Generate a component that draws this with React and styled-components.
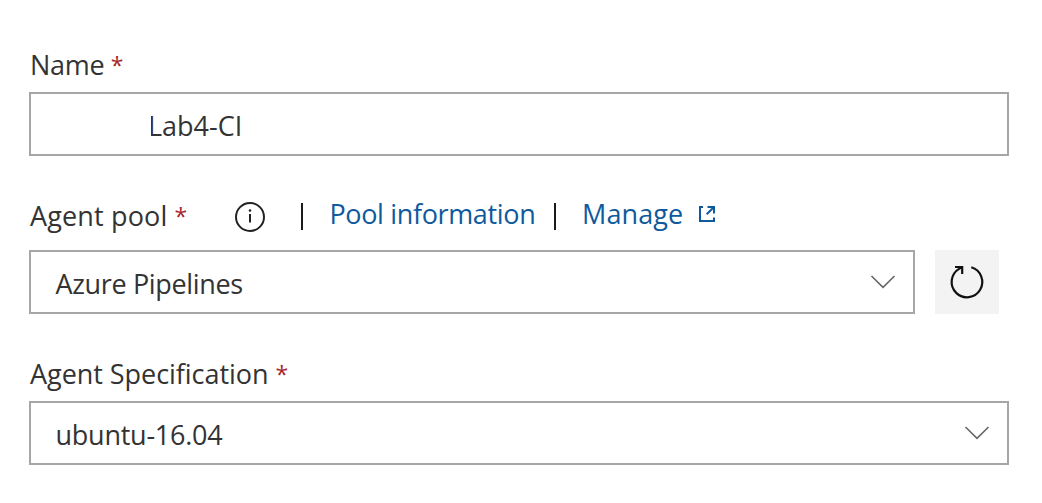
import React from "react";
import styled, { createGlobalStyle } from "styled-components";

const GlobalStyle = createGlobalStyle`
  * { box-sizing: border-box; }
  body {
    margin: 0;
    background: #fff;
    color: #333;
    font: 27px/38px "Open Sans", "Noto Sans", sans-serif;
  }
`;

const Form = styled.main`
  width: 1042px;
  height: 503px;
  padding: 46px 33px 0 29px;
  display: flex;
  flex-direction: column;
`;

const Field = styled.section`
  margin-bottom: ${(p) => p.$gap}px;
`;

const LabelRow = styled.div`
  display: flex;
  align-items: flex-start;
  height: ${(p) => p.$height}px;
  padding-left: 1px;
  white-space: pre;
`;

const Text = styled.span`
  letter-spacing: ${(p) => p.$spacing || 0}px;
`;

const Required = styled.span`
  width: 12px;
  margin-left: ${(p) => p.$gap}px;
  color: #a4262c;
  font-size: 23px;
`;

const ControlRow = styled.div`
  display: flex;
  gap: 20px;
`;

const Box = styled.div`
  position: relative;
  display: flex;
  align-items: center;
  justify-content: space-between;
  width: ${(p) => p.$width}px;
  height: 64px;
  padding: 4px 17px 0 ${(p) => p.$indent || 24.5}px;
  border: 2px solid #a6a6a6;
  white-space: pre;
`;

const Redaction = styled.span`
  position: absolute;
  top: 8px;
  bottom: 8px;
  left: 16px;
  width: 104px;
  background: #fff;
`;

const InfoIcon = styled.svg`
  margin: 4px 0 0 47.5px;
`;

const Divider = styled.span`
  width: 2px;
  height: 27px;
  margin-top: 6px;
  margin-left: ${(p) => p.$left}px;
  background: #1a1a1a;
`;

const Link = styled.a`
  margin-top: -2px;
  margin-left: ${(p) => p.$left}px;
  color: #0f5a9c;
  letter-spacing: ${(p) => p.$spacing}px;
`;

const ExternalIcon = styled.svg`
  margin: 7px 0 0 14px;
`;

const RefreshButton = styled.button`
  width: 64px;
  height: 64px;
  padding: 0;
  border: 0;
  background: #f3f3f3;
`;

const ChevronIcon = styled.svg`
  margin-top: -4px;
`;

function Chevron() {
  return (
    <ChevronIcon width="26" height="16" viewBox="0 0 26 16" fill="none" stroke="#666" strokeWidth="1.6">
      <path d="M1.5 2 13 13.3 24.5 2" />
    </ChevronIcon>
  );
}

export default function App() {
  return (
    <>
      <GlobalStyle />
      <Form>
        <Field $gap={41}>
          <LabelRow $height={46}>
            <Text $spacing={-0.3}>Name</Text>
            <Required $gap={6.5}>*</Required>
          </LabelRow>
          <Box $width={980} $indent={117}>
            <Text>Lab4-CI</Text>
            <Redaction />
          </Box>
        </Field>

        <Field $gap={41}>
          <LabelRow $height={53}>
            <Text $spacing={0.15}>Agent pool</Text>
            <Required $gap={7}>*</Required>
            <InfoIcon width="32" height="32" viewBox="0 0 32 32" fill="none" stroke="#222" strokeWidth="2">
              <circle cx="16" cy="16" r="14" />
              <path d="M16 13V21.5" />
              <circle cx="16" cy="9.5" r="1.3" fill="#222" stroke="none" />
            </InfoIcon>
            <Divider $left={35.5} />
            <Link $left={26} $spacing={-0.35}>Pool information</Link>
            <Divider $left={19} />
            <Link $left={25.7} $spacing={0.1}>Manage</Link>
            <ExternalIcon width="20" height="20" viewBox="0 0 20 20" fill="none" stroke="#0f5a9c" strokeWidth="2">
              <path d="M6 3H3V17H17V13.5M10.5 3H17V9.5M16.5 3.5 9.7 10.3" />
            </ExternalIcon>
          </LabelRow>
          <ControlRow>
            <Box $width={886}>
              <Text $spacing={-0.35}>Azure Pipelines</Text>
              <Chevron />
            </Box>
            <RefreshButton aria-label="Refresh">
              <svg width="64" height="64" viewBox="0 0 64 64" fill="none" stroke="#111" strokeWidth="2.2">
                <path d="M36.3 17.3A15.3 15.3 0 1 1 24 18.9L27 17" />
                <path d="M20 17H27.2V24" />
              </svg>
            </RefreshButton>
          </ControlRow>
        </Field>

        <Field $gap={0}>
          <LabelRow $height={46}>
            <Text $spacing={-0.05}>Agent Specification</Text>
            <Required $gap={7}>*</Required>
          </LabelRow>
          <Box $width={980}>
            <Text $spacing={-0.25}>ubuntu-16.04</Text>
            <Chevron />
          </Box>
        </Field>
      </Form>
    </>
  );
}
